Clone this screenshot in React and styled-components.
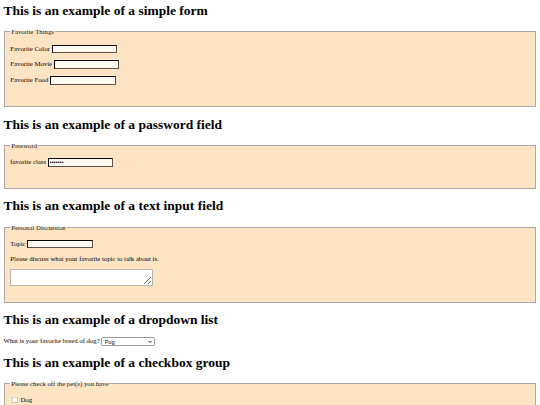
import React from "react";
import styled, { createGlobalStyle } from "styled-components";

const GlobalStyle = createGlobalStyle`
  html, body {
    margin: 0;
    background: #ffffff;
  }
  body {
    font-family: "Liberation Serif", "Times New Roman", serif;
    color: #000000;
  }
`;

// the page is drawn at desktop size and shown scaled down, as in the screenshot
const Page = styled.div`
  zoom: 0.421875;
  padding: 8px;
  font-size: 16px;
`;

const Heading = styled.h1`
  font-size: 32px;
  font-weight: bold;
  margin: 21.44px 0;
  &:first-child {
    margin-top: 0;
  }
`;

const Group = styled.fieldset`
  background-color: bisque;
  margin: 0 2px;
  padding: 0.35em 0.75em 36px;
  border: 3px solid #a9a9a9;
  legend {
    padding: 0 2px;
    color: #222;
  }
`;

const Row = styled.p`
  margin: 16px 0;
`;

const Line = styled.div`
  margin: 0;
`;

const TextField = styled.input`
  background-color: floralwhite;
  border: 2px inset #5e5048;
  padding: 1px 2px;
  font-family: "Liberation Sans", Arial, sans-serif;
  font-size: 13.33px;
  width: 147px;
`;

const Discussion = styled.textarea`
  font-family: "Liberation Mono", monospace;
  font-size: 13.33px;
  width: 330px;
  height: 32px;
  border: 2px solid #b4b4b4;
  border-radius: 2px;
  background: #ffffff;
`;

const SelectWrap = styled.span`
  position: relative;
  display: inline-block;
  vertical-align: baseline;
`;

const BreedSelect = styled.select`
  appearance: none;
  width: 128px;
  height: 20px;
  padding: 0 20px 0 5px;
  font-family: "Liberation Sans", Arial, sans-serif;
  font-size: 13.33px;
  color: #000;
  background: #ffffff;
  border: 2px solid #9a9a9a;
  border-radius: 3px;
`;

const Chevron = styled.svg`
  position: absolute;
  right: 7px;
  top: 6px;
  width: 10px;
  height: 8px;
  pointer-events: none;
`;

const Check = styled.label`
  display: block;
  margin: 16px 0;
  input {
    width: 14px;
    height: 14px;
    margin: 3px 6px 3px 4px;
    vertical-align: -2px;
  }
`;

export default function App() {
  return (
    <>
      <GlobalStyle />
      <Page>
        <Heading>This is an example of a simple form</Heading>
        <Group>
          <legend>Favorite Things</legend>
          <Row>
            Favorite Color <TextField type="text" name="color" />
          </Row>
          <Row>
            Favorite Movie <TextField type="text" name="movie" />
          </Row>
          <Row>
            Favorite Food <TextField type="text" name="food" />
          </Row>
        </Group>

        <Heading>This is an example of a password field</Heading>
        <Group>
          <legend>Password</legend>
          <Row>
            favorite class <TextField type="password" name="cls" defaultValue="chemist" />
          </Row>
        </Group>

        <Heading>This is an example of a text input field</Heading>
        <Group>
          <legend>Personal Discussion</legend>
          <Row>
            Topic <TextField type="text" name="topic" />
          </Row>
          <Row>Please discuss what your favorite topic to talk about is.</Row>
          <Discussion name="discussion" rows={2} cols={40} />
        </Group>

        <Heading>This is an example of a dropdown list</Heading>
        <Line>
          What is your favorite breed of dog?{" "}
          <SelectWrap>
            <BreedSelect name="breed" defaultValue="pug">
              <option value="pug">Pug</option>
              <option value="lab">Labrador Retriever</option>
              <option value="poodle">Poodle</option>
              <option value="beagle">Beagle</option>
            </BreedSelect>
            <Chevron viewBox="0 0 10 8">
              <path d="M1 2 L5 6 L9 2" fill="none" stroke="#000" strokeWidth="2" />
            </Chevron>
          </SelectWrap>
        </Line>

        <Heading>This is an example of a checkbox group</Heading>
        <Group>
          <legend>Please check off the pet(s) you have</legend>
          <Check>
            <input type="checkbox" name="pet" value="dog" />
            Dog
          </Check>
          <Check>
            <input type="checkbox" name="pet" value="cat" />
            Cat
          </Check>
          <Check>
            <input type="checkbox" name="pet" value="fish" />
            Fish
          </Check>
        </Group>
      </Page>
    </>
  );
}
